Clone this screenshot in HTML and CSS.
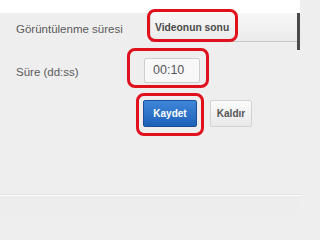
FILE: index.html
```html
<!DOCTYPE html>
<html lang="tr">
<head>
<meta charset="utf-8">
<link rel="stylesheet" href="styles.css">
</head>
<body>
<div class="page">
  <div class="topbar"></div>
  <div class="panel">
    <div class="row row-first">
      <span class="label">Görüntülenme süresi</span>
      <div class="select">Videonun sonu</div>
      <div class="edgebar"></div>
    </div>
    <div class="row row-second">
      <span class="label label-short">Süre (dd:ss)</span>
      <div class="input">00:10</div>
    </div>
    <div class="actions">
      <button class="btn btn-primary">Kaydet</button>
      <button class="btn btn-secondary">Kaldır</button>
    </div>
    <div class="footer"></div>
  </div>
  <div class="mark mark-select"></div>
  <div class="mark mark-input"></div>
  <div class="mark mark-save"></div>
</div>
</body>
</html>
```
FILE: styles.css
```css
html, body {
  margin: 0;
  padding: 0;
}
body {
  width: 300px;
  height: 214px;
  overflow: hidden;
  background: #eeeeee;
  font-family: "Liberation Sans", Arial, sans-serif;
}
.page {
  position: relative;
  width: 300px;
  height: 214px;
  overflow: hidden;
}
.topbar {
  height: 13px;
  background: #ffffff;
}
.panel {
  background: #eeeeee;
  padding-left: 16px;
}
.row {
  display: flex;
  align-items: flex-start;
}
.label {
  width: 134px;
  font-size: 11.5px;
  color: #5a5a5a;
  line-height: 32px;
}
.select {
  flex: 1;
  height: 29px;
  box-sizing: border-box;
  padding-left: 4px;
  line-height: 29px;
  font-size: 10.3px;
  font-weight: bold;
  color: #4a4a4a;
  background: linear-gradient(#f7f7f7, #ebebeb);
  border-left: 1px solid #dcdcdc;
  border-radius: 3px 0 0 0;
  border-bottom: 1px solid #c6c6c6;
}
.edgebar {
  width: 3px;
  height: 37px;
  background: #4a4a4a;
}
.row-second {
  margin-top: 8px;
  align-items: center;
}
.label-short {
  width: 128px;
  line-height: 25px;
  position: relative;
  top: 2px;
}
.input {
  width: 56px;
  height: 25px;
  box-sizing: border-box;
  border: 1px solid #cfcfcf;
  border-radius: 2px;
  background: #f8f8f8;
  padding-left: 8px;
  line-height: 23px;
  font-size: 12.5px;
  color: #555555;
}
.actions {
  display: flex;
  gap: 13px;
  margin-top: 17px;
  padding-left: 127px;
}
.btn {
  height: 27px;
  box-sizing: border-box;
  font-family: "Liberation Sans", Arial, sans-serif;
  font-size: 10px;
  font-weight: bold;
  border-radius: 2px;
  padding: 0;
  margin: 0;
}
.btn-primary {
  width: 54px;
  color: #ffffff;
  background: linear-gradient(#3f86da, #1d62b8);
  border: 1px solid #1a4f98;
}
.btn-secondary {
  width: 42px;
  color: #555555;
  background: linear-gradient(#fbfbfb, #e9e9e9);
  border: 1px solid #d2d2d2;
}
.footer {
  margin-top: 68px;
  margin-left: -16px;
  height: 20px;
  border-top: 1px solid #ffffff;
  box-shadow: 0 -1px 0 #e2e2e2;
  background: #ededed;
}
.mark {
  position: absolute;
  box-sizing: border-box;
  border: 3px solid #e0101c;
  border-radius: 8px;
}
.mark-select {
  left: 147px;
  top: 9px;
  width: 91px;
  height: 33px;
}
.mark-input {
  left: 127px;
  top: 48px;
  width: 82px;
  height: 40px;
}
.mark-save {
  left: 136px;
  top: 93px;
  width: 68px;
  height: 43px;
}
```
